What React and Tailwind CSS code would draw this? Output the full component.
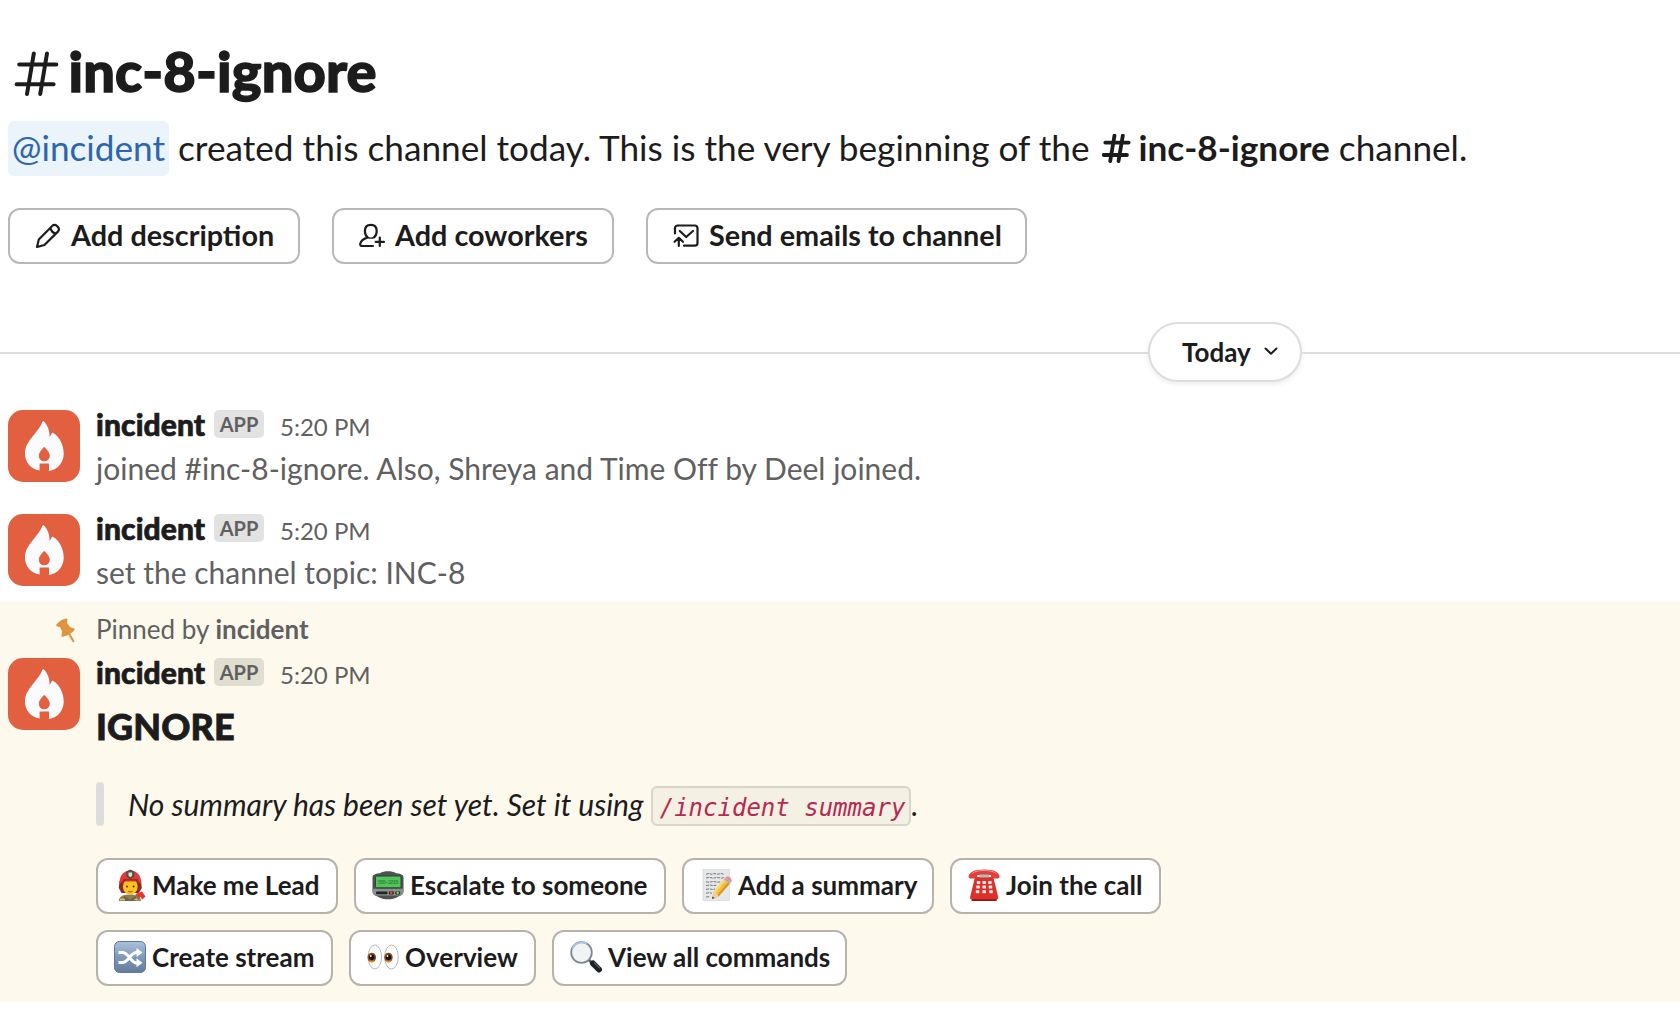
function HashIcon({ size, stroke }) {
  return (
    <svg width={size} height={size} viewBox="0 0 46 46" fill="none" stroke="#1d1c1d" strokeWidth={stroke} strokeLinecap="round">
      <path d="M19.8 2.5 13 43M33 2.5 26.2 43M5.2 13.6H42.3M2.6 33.3H39.6" />
    </svg>
  );
}

function PencilIcon() {
  return (
    <svg width="26" height="26" viewBox="0 0 26 26" fill="none" stroke="#1d1c1d" strokeWidth="2.200" strokeLinejoin="round" strokeLinecap="round">
      <path d="M2 24 3.8 16.6 17.2 2.9a3.3 3.3 0 0 1 4.7 0l1 1a3.3 3.3 0 0 1 0 4.700L9.400 22Z" />
      <path d="M15.6 6c.8 2.2 2.2 3.6 4.4 4.400" />
    </svg>
  );
}

function PersonAddIcon() {
  return (
    <svg width="26" height="26" viewBox="0 0 26 26" fill="none" stroke="#1d1c1d" strokeWidth="2.200" strokeLinejoin="round" strokeLinecap="round">
      <path d="M14 23H3.200C1.800 23 1.100 22.200 1.200 21 1.600 18 4.600 15.800 8.600 14.400 6.800 13 5.900 11 5.900 8.200 5.900 4.200 8 1.900 11.800 1.900s5.900 2.300 5.900 6.300c0 2.800-.9 4.800-2.700 6.200" />
      <path d="M8.600 14.400c2 1 4.400 1 6.400 0" strokeWidth="1.200" />
      <path d="M20.800 14.600v8.400M16.600 18.800H25" />
    </svg>
  );
}

function MailIcon() {
  return (
    <svg width="26" height="26" viewBox="0 0 26 26" fill="none" stroke="#1d1c1d" strokeWidth="2.200" strokeLinejoin="round" strokeLinecap="round">
      <path d="M2 10.500V5.200A2.700 2.700 0 0 1 4.700 2.500H21.800a2.700 2.700 0 0 1 2.700 2.700V20a2.700 2.700 0 0 1-2.700 2.700H11" />
      <path d="M6.800 8 13.200 14 20 8" />
      <path d="M5.800 23v-7M1.600 18.800 5.800 14.800l4.200 4" />
    </svg>
  );
}

function PinIcon() {
  return (
    <svg width="20" height="25" viewBox="0 0 20 25" fill="#de9440">
      <path d="M.5 6.600C2.600 3.600 6 1.300 10.300.600c1 0 1.500 1 1 1.900l-.2 2.700 3.500 4.400 3 .7c1.200.5 1.300 1.600.4 2.400-3 2.800-6.800 5-10.800 6-1.200.2-2-.7-1.700-1.800l.7-3.200L4 9 1.300 8.600C.3 8.300 0 7.400.5 6.600Z" />
      <path d="M13.300 16.300 17.300 23" stroke="#de9440" strokeWidth="2.200" strokeLinecap="round" />
    </svg>
  );
}

function Avatar() {
  return (
    <svg className="shrink-0" width="72" height="72" viewBox="0 0 72 72">
      <rect width="72" height="72" rx="15" fill="#e25f40" />
      <path d="M34.600 11.600c.4-.5 1-.5 1.400 0C39.500 15.400 41.600 20 41.600 26.800c1-.6 1.500-2 1.900-3.200.3-.8 1-1.100 1.800-.7 5.600 3.300 10.400 11.300 10.400 20.500 0 9.400-6.200 16.200-14.700 17.600V53.600h-9.400v7C22.600 59 17 52 17 43.400 17 31 29.600 24 34.600 11.600Z" fill="#fafbfe" />
      <path d="M35.800 37.300c.2-.3.700-.3.900 0 2.300 2.700 5.100 5.300 5.100 8.500a5.500 5.500 0 0 1-11 0c0-3.200 2.700-5.800 5-8.500Z" fill="#e25f40" />
    </svg>
  );
}

function Firefighter() {
  return (
    <svg width="32" height="32" viewBox="0 0 32 32">
      <path d="M5.500 12h21.500l.8 7-3 5H7.500L4.800 19Z" fill="#8a2a22" />
      <path d="M4.800 32c.3-4.500 4-6.500 11-6.500S26.600 27.500 27 32Z" fill="#8d7d55" />
      <path d="M10 26.500 16 31l6-4.500v5.500H10Z" fill="#6e6244" />
      <path d="M6 30.500h5M20.500 30.500h5" stroke="#d9cf6a" strokeWidth="1.300" />
      <ellipse cx="16.300" cy="17.500" rx="7.400" ry="8.300" fill="#fcc21f" />
      <path d="M5.500 15.500C5 7 9.500 1.500 16.300 1.500S27.800 7 27.300 15.500l-3-3.100H8.400Z" fill="#e03a37" />
      <path d="M8.500 12.500c5-1.500 11-1.500 16 0l-1-2.500H9.500Z" fill="#b52020" />
      <path d="M12.300 2.500 16.300.500l4 2v5l-4 3-4-3Z" fill="#55514a" />
      <path d="M14.500 3.500h3.600v3.300l-1.800 1.500-1.800-1.500Z" fill="#e4dfce" />
      <circle cx="13" cy="17.500" r="1" fill="#4b2d12" />
      <circle cx="19.600" cy="17.500" r="1" fill="#4b2d12" />
      <path d="M14 22.300q2.300 1.200 4.600 0" stroke="#b0561c" strokeWidth="1.200" fill="none" />
      <path d="m24 31 3-7" stroke="#9b6b3c" strokeWidth="1.600" />
      <path d="m21.500 25 6.500-2.600 3.500 5.200-3.300 2.800-2-2.600-3.200.2Z" fill="#e5362f" />
    </svg>
  );
}

function Pager() {
  return (
    <svg width="32" height="32" viewBox="0 0 32 32">
      <path d="M8 4.200C10 2.600 13 2.200 16 2.200s6 .4 8 2c3 0 7.500 1 7.500 4v14c0 3-2 4.300-5.500 5.500-3 2-6.500 2.500-10 2.500s-7-.5-10-2.500C2.500 26.500.5 25.200.5 22.200v-14c0-3 4.500-4 7.500-4Z" fill="#505153" />
      <path d="M.5 19.800h31v3c0 2.500-2 3.600-5 3.600h-21c-3 0-5-1.100-5-3.600Z" fill="#8d8f91" />
      <rect x="3.500" y="7" width="25.500" height="11.800" rx="1.200" fill="#52c45c" stroke="#2b4430" strokeWidth="1" />
      <text x="16.200" y="14.800" textAnchor="middle" fontSize="5.600" fontWeight="700" fontFamily="Liberation Mono, monospace" textLength="21" fill="#2f8a3b">555-3215</text>
      <rect x="4" y="22.400" width="11.500" height="2.800" rx="1" fill="#232425" />
      <rect x="16.800" y="22.200" width="5" height="3.200" rx="1.200" fill="#3a2426" />
      <rect x="23.200" y="22.200" width="5" height="3.200" rx="1.200" fill="#263a29" />
      <circle cx="19.300" cy="23.800" r="1.200" fill="#e8524b" />
      <circle cx="25.700" cy="23.800" r="1.200" fill="#6de264" />
    </svg>
  );
}

function Memo() {
  return (
    <svg width="32" height="32" viewBox="0 0 32 32">
      <rect x="3" y=".5" width="26.500" height="31" fill="#e6e7e8" stroke="#d3d4d5" strokeWidth=".6" />
      <path d="M6 5.200l3-.8 2 .9 3-.7 4 .6 3-.7 3 .8M6 9l4-.6 3 .8 4-.7 5 .6 3-.6M6 12.800l3 .5 4-.8 5 .7 3-.5M6 16.600l4-.6 3 .7 4-.6M6 20.400l3-.5 4 .6 2-.5M6 24.200l3-.5 3 .5M6 28l4-.5" fill="none" stroke="#77797b" strokeWidth="1" strokeDasharray="3 .8" />
      <path d="m12 30 1.400-7L24 10.500l5.500 4.400L18.600 27.500Z" fill="#f6c038" />
      <path d="M13.400 23 24 10.500l1.600 1.300L15 24.400Z" fill="#fbdb6b" />
      <path d="m18.600 27.500-1.600-1.300L27.800 13.500l1.700 1.400Z" fill="#d9952a" />
      <path d="m12 30 1.400-7c2 .5 4.300 2.300 5.200 4.500Z" fill="#ecd0a0" />
      <path d="m12 30 .6-2.600 2 1.500Z" fill="#333" />
      <path d="m24 10.500 1.500-1.700 5.400 4.400-1.400 1.700Z" fill="#a9adb2" />
      <path d="m25.500 8.800.8-.9c2.200-1.300 5.800 1.500 5.400 4.400l-.8.900Z" fill="#ee8b8f" />
    </svg>
  );
}

function Phone() {
  return (
    <svg width="32" height="32" viewBox="0 0 32 32">
      <path d="M3.500 28.500h25.300V31c0 .6-.4 1-1 1H4.500c-.6 0-1-.4-1-1Z" fill="#8f1714" />
      <path d="M7 8h18.300l5 20.500c.1 1-.5 1.700-1.500 1.700H3.500c-1 0-1.600-.7-1.500-1.700Z" fill="#dc3029" />
      <path d="M.6 7.600C1 3.200 6 .4 16.200.400S31.300 3.200 31.600 7.600c0 1.200-.6 2-1.600 2h-5c-1 0-1.600-.6-1.800-1.600l-.5-2H9.500L9 8c-.2 1-.8 1.600-1.800 1.600h-5c-1 0-1.600-.8-1.600-2Z" fill="#e2403a" />
      <path d="M4 4.600C7 2 12 1.500 16.200 1.500s9.300.5 12.200 3.100" fill="none" stroke="#f3938b" strokeWidth="1" />
      <path d="M12 5.500h8.500l.8 3h-10Z" fill="#b5b6ba" />
      <g fill="#f4ecec">
        <rect x="8.800" y="12" width="3.400" height="3" rx=".6" />
        <rect x="14.500" y="12" width="3.400" height="3" rx=".6" />
        <rect x="20.200" y="12" width="3.400" height="3" rx=".6" />
        <rect x="8.300" y="16.600" width="3.500" height="3" rx=".6" />
        <rect x="14.500" y="16.600" width="3.500" height="3" rx=".6" />
        <rect x="20.700" y="16.600" width="3.500" height="3" rx=".6" />
        <rect x="7.800" y="21.200" width="3.600" height="3" rx=".6" />
        <rect x="14.400" y="21.200" width="3.600" height="3" rx=".6" />
        <rect x="21.200" y="21.200" width="3.600" height="3" rx=".6" />
      </g>
    </svg>
  );
}

function Shuffle() {
  return (
    <svg width="32" height="32" viewBox="0 0 32 32">
      <defs>
        <linearGradient id="shuffle-bg" x1="0" y1="0" x2="0" y2="1">
          <stop offset="0" stopColor="#a9c1dc" />
          <stop offset=".5" stopColor="#7f9bbb" />
          <stop offset="1" stopColor="#637b98" />
        </linearGradient>
      </defs>
      <rect x=".5" y=".5" width="31" height="31" rx="5" fill="url(#shuffle-bg)" stroke="#5f7793" />
      <path d="M4.500 11.500h4c3 0 4.500 2 7 5s4 5.500 7 5.500h1.500M4.500 21.500h4c3 0 4.500-2 7-5s4-5 7-5h1.500" fill="none" stroke="#fff" strokeWidth="2.900" />
      <path d="m22.500 7 6 4.500-6 4.500ZM22.500 17.200l6 4.600-6 4.400Z" fill="#fff" />
    </svg>
  );
}

function Eyes() {
  return (
    <svg width="32" height="32" viewBox="0 0 32 32">
      <g fill="#fdfdfd" stroke="#b9b9b9" strokeWidth="1">
        <ellipse cx="7.800" cy="16" rx="6.800" ry="12" />
        <ellipse cx="24.500" cy="16" rx="6.800" ry="12" />
      </g>
      <ellipse cx="4.800" cy="16.500" rx="4.200" ry="4.800" fill="#8a4d14" />
      <ellipse cx="21.500" cy="16.500" rx="4.200" ry="4.800" fill="#8a4d14" />
      <path d="M2.500 19.700q2.300 2 4.600 0M19.200 19.700q2.300 2 4.600 0" stroke="#d9982f" strokeWidth="1.400" fill="none" />
      <circle cx="4.800" cy="16.200" r="2.700" fill="#1c0d04" />
      <circle cx="21.500" cy="16.200" r="2.700" fill="#1c0d04" />
      <circle cx="3.800" cy="15" r=".9" fill="#fff" />
      <circle cx="20.500" cy="15" r=".9" fill="#fff" />
    </svg>
  );
}

function Magnifier() {
  return (
    <svg width="32" height="32" viewBox="0 0 32 32">
      <path d="m18.500 18.500 4 4" stroke="#555" strokeWidth="2.600" />
      <path d="m23 22.500 6 6" stroke="#1f2225" strokeWidth="6" strokeLinecap="round" />
      <path d="m24.500 21.800 5 5" stroke="#5d6368" strokeWidth="1.200" strokeLinecap="round" />
      <circle cx="11.500" cy="11.500" r="10.300" fill="#f1f3f4" stroke="#7f8890" strokeWidth="1.800" />
      <path d="M2.500 7.500A10.300 10.300 0 0 1 17 2.700" stroke="#a8c6e6" strokeWidth="1.800" fill="none" />
    </svg>
  );
}

function ToolButton({ icon, label, className }) {
  return (
    <button className={`flex h-14 items-center rounded-xl border-2 border-[#b8b8b8] bg-white pl-[25px] text-[28.8px] leading-10 font-bold whitespace-nowrap ${className}`}>
      <span className="mr-[10px] shrink-0">{icon}</span>
      <span className="pb-[3px]">{label}</span>
    </button>
  );
}

function ActionButton({ icon, label, className }) {
  return (
    <button className={`flex h-14 items-center rounded-xl border-2 border-[#b5b3ab] bg-white pl-4 text-[26px] leading-10 font-bold whitespace-nowrap ${className}`}>
      <span className="mr-[6px] shrink-0 pb-0.5">{icon}</span>
      <span className="pb-0.5">{label}</span>
    </button>
  );
}

function Byline({ badge }) {
  return (
    <div className="flex h-[37px] items-start">
      <span className="w-[118px] text-[30px] leading-[29px] font-black tracking-[0.1px] [-webkit-text-stroke:0.7px_#1d1c1d]">incident</span>
      <span className={`flex h-7 w-[50px] items-center justify-center rounded-[5px] text-[20px] leading-7 font-bold text-[#616061] ${badge}`}>APP</span>
      <span className="ml-4 text-[24px] leading-[33px] text-[#616061]">5:20 PM</span>
    </div>
  );
}

function Message({ children, badge = "bg-[#e2e2e2]" }) {
  return (
    <div className="flex h-[88px] gap-4 pl-2">
      <Avatar />
      <div className="min-w-0 grow">
        <Byline badge={badge} />
        {children}
      </div>
    </div>
  );
}

export default function App() {
  return (
    <main className="flex h-[1030px] w-[1680px] flex-col overflow-hidden bg-white font-['Lato',sans-serif] text-[#1d1c1d]">
      <header className="h-[322px] shrink-0 pt-[39px] pl-2">
        <h1 className="flex h-[82px] items-start text-[56px] leading-[64px] font-black">
          <span className="mt-3 mr-[9px] ml-[5.5px]"><HashIcon size={46} stroke={4} /></span>
          <span className="tracking-[0.15px] [-webkit-text-stroke:1.4px_#1d1c1d]">inc-8-ignore</span>
        </h1>
        <p className="flex h-[55px] items-center text-[35.2px] leading-[53px] whitespace-pre">
          <span className="flex h-[55px] w-[161px] items-center rounded-md bg-[#ebf3fb] pl-1 text-[#2c66ab]"><span className="pb-0.5">@incident</span></span>
          <span className="ml-[9px] pb-0.5">created this channel today. This is the very beginning of the</span>
          <span className="mr-2 ml-3"><HashIcon size={29} stroke={6} /></span>
          <b className="pb-0.5">inc-8-ignore</b>
          <span className="pb-0.5"> channel.</span>
        </p>
        <div className="mt-8 flex gap-8">
          <ToolButton className="w-[292px]" icon={<PencilIcon />} label="Add description" />
          <ToolButton className="w-[282px]" icon={<PersonAddIcon />} label="Add coworkers" />
          <ToolButton className="w-[381px]" icon={<MailIcon />} label="Send emails to channel" />
        </div>
      </header>

      <div className="flex h-[60px] shrink-0 items-center">
        <div className="mt-0.5 h-0.5 w-[1148px] bg-[#dddddd]" />
        <button className="flex h-[60px] w-[154px] items-center rounded-full border-2 border-[#dddddd] bg-white pl-8 text-[26px] leading-10 font-bold shadow-[0_2px_5px_rgba(0,0,0,0.08)]">
          <span>Today</span>
          <svg className="ml-[13px] mb-0.5" width="14" height="9" viewBox="0 0 14 9" fill="none" stroke="#1d1c1d" strokeWidth="2" strokeLinecap="round" strokeLinejoin="round">
            <path d="m1.500 1.500 5.500 5.300 5.500-5.300" />
          </svg>
        </button>
        <div className="mt-0.5 h-0.5 grow bg-[#dddddd]" />
      </div>

      <section className="flex h-[220px] shrink-0 flex-col gap-4 pt-7">
        <Message>
          <p className="text-[30px] leading-[43px] tracking-[0.015px] text-[#616061] [font-variant-ligatures:common-ligatures]">joined #inc-8-ignore. Also, Shreya and Time Off by Deel joined.</p>
        </Message>
        <Message>
          <p className="text-[30px] leading-[43px] text-[#616061]">set the channel topic: INC-8</p>
        </Message>
      </section>

      <section className="h-[400px] shrink-0 bg-[#fef9ed] pt-2">
        <div className="flex h-12 pl-14 text-[26px] leading-[38px] text-[#616061]">
          <span className="mt-2 w-10"><PinIcon /></span>
          <span>Pinned by <b>incident</b></span>
        </div>
        <Message badge="bg-[#e0ddd1]">
          <h2 className="h-[87px] pt-[6px] text-[36px] leading-[50px] font-black tracking-[0.1px] [-webkit-text-stroke:0.8px_#1d1c1d]">IGNORE</h2>
          <div className="flex h-[44px] items-center text-[30px] leading-[44px] italic">
            <span className="mr-6 h-[44px] w-2 rounded-full bg-[#dddddd]" />
            <span>No summary has been set yet. Set it using</span>
            <code className="mt-[3px] mr-px ml-[7px] flex h-10 w-[260px] items-center justify-center rounded-md border-2 border-[#d8d5ca] bg-[#f5f0e4] pt-[4px] pl-1 font-['DejaVu_Sans_Mono',monospace] text-[24px] leading-8 text-[#b52a50]">/incident summary</code>
            <span>.</span>
          </div>
          <div className="mt-8 flex gap-4">
            <ActionButton className="w-[242px]" icon={<Firefighter />} label="Make me Lead" />
            <ActionButton className="w-[312px]" icon={<Pager />} label="Escalate to someone" />
            <ActionButton className="w-[252px]" icon={<Memo />} label="Add a summary" />
            <ActionButton className="w-[211px]" icon={<Phone />} label="Join the call" />
          </div>
          <div className="mt-4 flex gap-4">
            <ActionButton className="w-[237px]" icon={<Shuffle />} label="Create stream" />
            <ActionButton className="w-[187px]" icon={<Eyes />} label="Overview" />
            <ActionButton className="w-[295px]" icon={<Magnifier />} label="View all commands" />
          </div>
        </Message>
      </section>
    </main>
  );
}
